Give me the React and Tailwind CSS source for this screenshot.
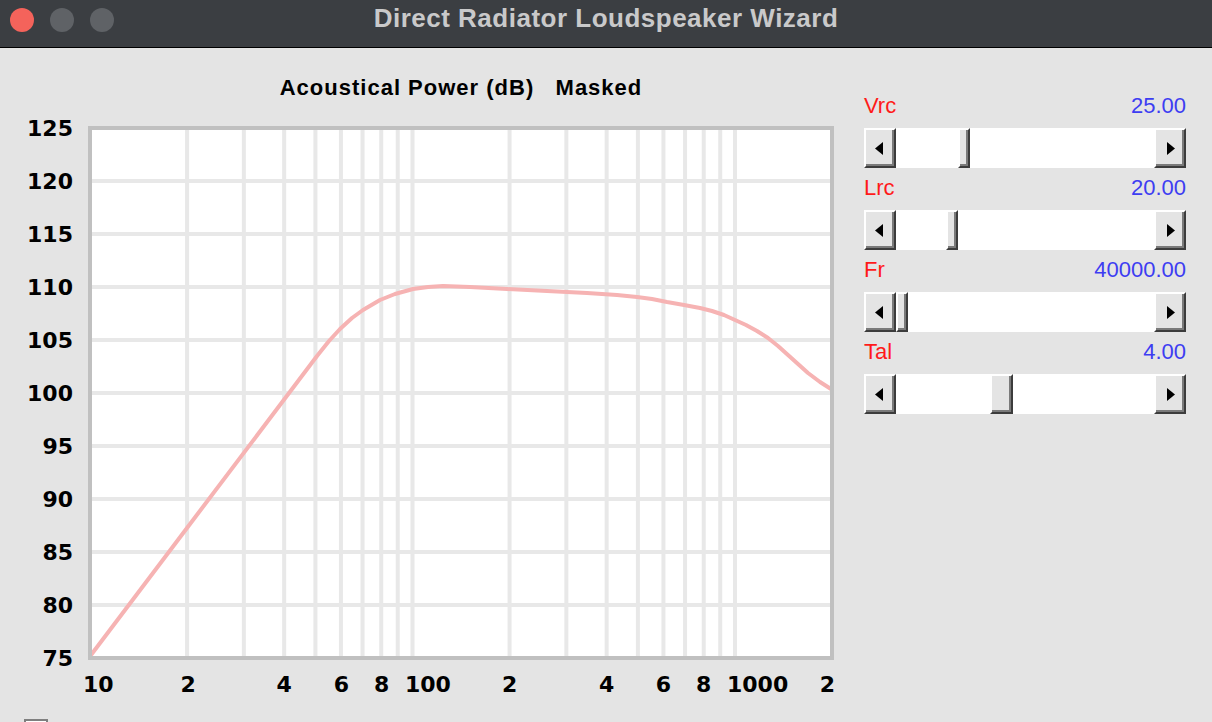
import React from 'react'

const NUM_FONT = { fontFamily: '"DejaVu Sans", sans-serif', fontWeight: 700, fontSize: 22 }

// log axis: 10 Hz at x=90, one decade = 322.5px
const fx = (f) => 90 + 322.5 * Math.log10(f / 10)
const dy = (db) => 128 + (125 - db) * 10.6

const vLines = [20, 30, 40, 50, 60, 70, 80, 90, 100, 200, 300, 400, 500, 600, 700, 800, 900, 1000]
const hLines = [80, 85, 90, 95, 100, 105, 110, 115, 120]
const yLabels = [125, 120, 115, 110, 105, 100, 95, 90, 85, 80, 75]

const xLabels = [
  { t: '10', x: 83, a: 'start' },
  { t: '2', x: fx(20) + 1, a: 'middle' },
  { t: '4', x: fx(40), a: 'middle' },
  { t: '6', x: fx(60) + 0.5, a: 'middle' },
  { t: '8', x: fx(80) + 0.5, a: 'middle' },
  { t: '100', x: 405, a: 'start' },
  { t: '2', x: fx(200), a: 'middle' },
  { t: '4', x: fx(400), a: 'middle' },
  { t: '6', x: fx(600), a: 'middle' },
  { t: '8', x: fx(800), a: 'middle' },
  { t: '1000', x: 727, a: 'start' },
  { t: '2', x: 827.5, a: 'middle' },
]

const curve = [
  [91, 655], [187, 528], [283, 401], [317, 356], [329, 341], [340, 329], [352, 318],
  [363, 310], [380, 300], [395, 294], [413, 289], [428, 287], [443, 286], [470, 287],
  [507, 289], [547, 291], [587, 293], [617, 295], [637, 297], [652, 299], [667, 302],
  [684, 305], [700, 308], [712, 311], [724, 315], [735, 320], [746, 325], [757, 331],
  [768, 338], [778, 346], [788, 355], [798, 364], [808, 373], [820, 382], [831, 389],
]

const sliders = [
  { name: 'Vrc', value: '25.00', pos: 62, w: 12 },
  { name: 'Lrc', value: '20.00', pos: 50, w: 12 },
  { name: 'Fr', value: '40000.00', pos: 0, w: 12 },
  { name: 'Tal', value: '4.00', pos: 94, w: 23 },
]

const bevel =
  'bg-[#e4e4e4] border-t-2 border-l-2 border-t-white border-l-white border-r-2 border-b-2 border-r-[#3c3c3c] border-b-[#3c3c3c] shadow-[inset_-2px_-2px_0_#7a7a7a]'

function Arrow({ dir }) {
  return (
    <svg width="8" height="13" viewBox="0 0 8 13">
      {dir === 'left'
        ? <polygon points="8,0 0,6.5 8,13" fill="#000" />
        : <polygon points="0,0 8,6.5 0,13" fill="#000" />}
    </svg>
  )
}

function ScrollBar({ pos, w }) {
  return (
    <div className="flex h-[40px] w-[322px]">
      <div className={`w-[32px] h-full flex items-center justify-center pr-[2px] ${bevel}`}>
        <Arrow dir="left" />
      </div>
      <div className="flex-1 bg-white flex">
        <div style={{ width: pos }} />
        <div className={`h-full ${bevel}`} style={{ width: w }} />
      </div>
      <div className={`w-[32px] h-full flex items-center justify-center pl-[2px] ${bevel}`}>
        <Arrow dir="right" />
      </div>
    </div>
  )
}

function Chart() {
  return (
    <svg width="850" height="600" className="block">
      <g transform="translate(0,-99)">
        <rect x="90" y="128" width="742" height="530" fill="#fff" />
        {vLines.map((f) => (
          <line key={f} x1={fx(f)} x2={fx(f)} y1="130" y2="656" stroke="#e8e8e8" strokeWidth="4" />
        ))}
        {hLines.map((d) => (
          <line key={d} x1="92" x2="830" y1={dy(d)} y2={dy(d)} stroke="#e8e8e8" strokeWidth="4" />
        ))}
        <polyline
          points={curve.map((p) => p.join(',')).join(' ')}
          fill="none"
          stroke="#f6b3b3"
          strokeWidth="4"
          strokeLinejoin="round"
        />
        <rect x="90" y="128" width="742" height="530" fill="none" stroke="#c0c0c0" strokeWidth="4" />
        {yLabels.map((v) => (
          <text key={v} x="73" y={dy(v) + 8} textAnchor="end" fill="#000" style={NUM_FONT}>{v}</text>
        ))}
        {xLabels.map((l, i) => (
          <text key={i} x={l.x} y="692" textAnchor={l.a} fill="#000" style={NUM_FONT}>{l.t}</text>
        ))}
      </g>
    </svg>
  )
}

export default function App() {
  return (
    <div className="w-[1212px] h-[722px] overflow-hidden bg-[#e4e4e4] flex flex-col">
      {/* Title bar */}
      <div className="h-[48px] shrink-0 bg-[#3b3e42] border-b border-black grid grid-cols-[1fr_auto_1fr]">
        <div className="flex items-start gap-[16px] pl-[10px] pt-[8px]">
          <span className="w-[24px] h-[24px] rounded-full bg-[#f4635b]" />
          <span className="w-[24px] h-[24px] rounded-full bg-[#5f6266]" />
          <span className="w-[24px] h-[24px] rounded-full bg-[#5f6266]" />
        </div>
        <div className="pt-[5px] text-[26px] leading-[26px] font-bold tracking-[0.5px] text-[#c9c9ca] font-['Liberation_Sans',sans-serif]">
          Direct Radiator Loudspeaker Wizard
        </div>
        <div />
      </div>

      <div className="flex flex-1">
        {/* Plot */}
        <div className="w-[850px] shrink-0 flex flex-col">
          <div className="ml-[88px] w-[746px] pt-[29px] text-center text-[22px] leading-[22px] font-bold tracking-[1px] text-black font-['Liberation_Sans',sans-serif] whitespace-pre">
            {'Acoustical Power (dB)   Masked'}
          </div>
          <Chart />
          <div className="ml-[24px] mt-[20px] w-[24px] h-[24px] bg-white border-2 border-[#7f7f7f]" />
        </div>

        {/* Parameters */}
        <div className="ml-[14px] pt-[47px] flex flex-col">
          {sliders.map((s) => (
            <div key={s.name} className="mb-[9px]">
              <div className="h-[33px] flex justify-between items-start text-[22px] leading-[22px] font-['Liberation_Sans',sans-serif]">
                <span className="text-[#ff1a1a]">{s.name}</span>
                <span className="text-[#3d3df2]">{s.value}</span>
              </div>
              <ScrollBar pos={s.pos} w={s.w} />
            </div>
          ))}
        </div>
      </div>
    </div>
  )
}
